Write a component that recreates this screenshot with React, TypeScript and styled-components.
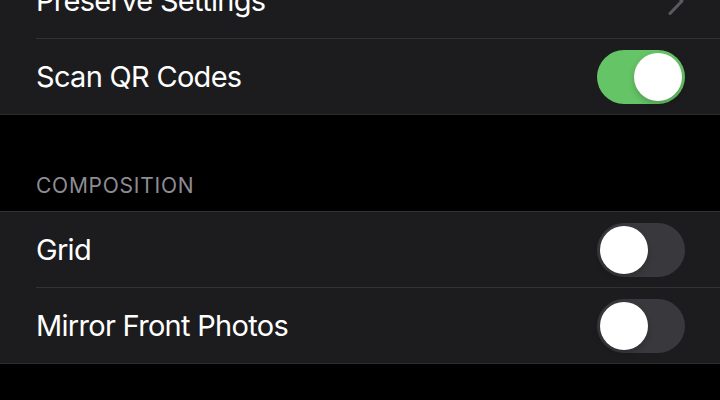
import React from "react";
import styled, { createGlobalStyle } from "styled-components";

const Global = createGlobalStyle`
  html, body { margin: 0; padding: 0; background: #000; }
  body { font-family: Inter, "Noto Sans", "Liberation Sans", sans-serif; -webkit-font-smoothing: antialiased; }
  #root { width: 720px; height: 400px; overflow: hidden; background: #000; }
`;

const Page = styled.div`
  display: flex;
  flex-direction: column;
  width: 720px;
`;

const Group = styled.div<{ $offset?: number }>`
  display: flex;
  flex-direction: column;
  background: #1c1c1e;
  border-top: 1px solid #323235;
  border-bottom: 1px solid #2c2c2f;
  margin-top: ${(p) => (p.$offset ? `${p.$offset}px` : "0")};
`;

const Row = styled.div`
  padding-left: 36px;
`;

const RowInner = styled.div<{ $last?: boolean }>`
  height: 75px;
  display: flex;
  align-items: center;
  justify-content: space-between;
  padding-right: 35px;
  border-bottom: ${(p) => (p.$last ? "none" : "1px solid #323235")};
`;

const Label = styled.span`
  color: #ffffff;
  font-size: 29px;
  letter-spacing: -0.7px;
  line-height: 36px;
`;

const Header = styled.div`
  height: 96px;
  display: flex;
  align-items: flex-end;
  padding: 0 36px 13px;
  box-sizing: border-box;
  color: #8d8d93;
  font-size: 21px;
  letter-spacing: 0.75px;
  line-height: 24px;
`;

const Track = styled.div<{ $on: boolean }>`
  width: 88px;
  height: 54px;
  border-radius: 27px;
  background: ${(p) => (p.$on ? "#65c466" : "#39393d")};
  display: flex;
  align-items: center;
  justify-content: ${(p) => (p.$on ? "flex-end" : "flex-start")};
  padding: 0 3px;
  box-sizing: border-box;
  flex-shrink: 0;
`;

const Knob = styled.div`
  width: 48px;
  height: 48px;
  border-radius: 50%;
  background: #ffffff;
  box-shadow: 0 3px 6px rgba(0, 0, 0, 0.2);
`;

const Chevron = styled.svg`
  width: 16px;
  height: 28px;
  display: block;
  margin-right: 1px;
`;

const Toggle = ({ on }: { on: boolean }) => (
  <Track $on={on}>
    <Knob />
  </Track>
);

export default function App() {
  return (
    <Page>
      <Global />
      <Group $offset={-38}>
        <Row>
          <RowInner>
            <Label>Preserve Settings</Label>
            <Chevron viewBox="0 0 16 28">
              <polyline points="2,1.5 14,14 2,26.5" fill="none" stroke="#5a5a5f" strokeWidth="3" strokeLinecap="round" strokeLinejoin="round" />
            </Chevron>
          </RowInner>
        </Row>
        <Row>
          <RowInner $last>
            <Label>Scan QR Codes</Label>
            <Toggle on />
          </RowInner>
        </Row>
      </Group>
      <Header>COMPOSITION</Header>
      <Group>
        <Row>
          <RowInner>
            <Label>Grid</Label>
            <Toggle on={false} />
          </RowInner>
        </Row>
        <Row>
          <RowInner $last>
            <Label>Mirror Front Photos</Label>
            <Toggle on={false} />
          </RowInner>
        </Row>
      </Group>
    </Page>
  );
}
